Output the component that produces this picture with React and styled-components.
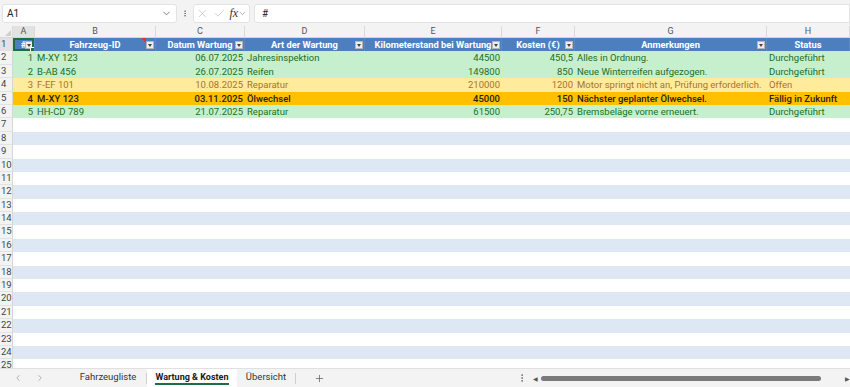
import React from "react";
import styled, { createGlobalStyle } from "styled-components";
import { X, Check, ChevronDown, EllipsisVertical, ChevronLeft, ChevronRight, Plus } from "lucide-react";

const COLS = "13px 22px 121px 89px 120px 137px 73px 192px 83px";
const ROW_H = 13.4;

const GlobalStyle = createGlobalStyle`
  html, body {
    margin: 0;
    padding: 0;
    background: #ffffff;
  }
  body {
    font-family: Roboto, "Liberation Sans", sans-serif;
  }
`;

const Shell = styled.div`
  width: 850px;
  height: 387px;
  display: flex;
  flex-direction: column;
  overflow: hidden;
  background: #ffffff;
`;

const FormulaBar = styled.div`
  height: 26px;
  flex: none;
  display: flex;
  align-items: center;
  padding: 0 0 0 2px;
  gap: 4px;
  background: #f3f3f3;
  box-sizing: border-box;
`;

const Box = styled.div`
  height: 19px;
  width: ${(p) => (p.$w ? `${p.$w}px` : "auto")};
  flex: ${(p) => (p.$grow ? 1 : "none")};
  background: #ffffff;
  border: 1px solid #e3e3e3;
  border-radius: ${(p) => (p.$grow ? "3px 0 0 3px" : "3px")};
  box-sizing: border-box;
  display: flex;
  align-items: center;
  padding: 0 ${(p) => (p.$tight ? "2px" : "4px")};
  gap: ${(p) => (p.$tight ? "4px" : "6px")};
  font-size: 10px;
  color: #222;
`;

const NameText = styled.span`
  flex: 1;
`;

const Fx = styled.span`
  font-family: "Liberation Serif", serif;
  font-style: italic;
  font-size: 12px;
  color: #333;
`;

const Dots = styled.div`
  display: flex;
  align-items: center;
  color: #555;
  width: 8px;
  justify-content: center;
`;

const Sheet = styled.div`
  flex: 1;
  overflow: hidden;
  display: flex;
  flex-direction: column;
`;

const LetterRow = styled.div`
  display: grid;
  grid-template-columns: ${COLS};
  height: 12px;
  flex: none;
  background: #f3f3f3;
  border-bottom: 1px solid #d6d6d6;
  box-sizing: border-box;
`;

const Letter = styled.div`
  font-size: 9px;
  line-height: 11px;
  text-align: center;
  color: #555;
  border-right: 1px solid #dadada;
  background: ${(p) => (p.$active ? "#e2e2e2" : "transparent")};
`;

const Corner = styled.div`
  border-right: 1px solid #dadada;
  position: relative;
  &::after {
    content: "";
    position: absolute;
    right: 1px;
    bottom: 1px;
    border-left: 6px solid transparent;
    border-bottom: 6px solid #cfcfcf;
  }
`;

const Row = styled.div`
  display: grid;
  grid-template-columns: ${COLS};
  height: ${ROW_H}px;
  flex: none;
  background: ${(p) => p.$bg};
  color: ${(p) => p.$fg || "#222"};
  font-weight: ${(p) => (p.$bold ? 500 : 400)};
`;

const RowNum = styled.div`
  background: ${(p) => (p.$active ? "#e2e2e2" : "#f3f3f3")};
  border-right: 1px solid #d6d6d6;
  border-bottom: 1px solid #e2e2e2;
  box-sizing: border-box;
  font-size: 9.5px;
  line-height: ${ROW_H - 1}px;
  padding-left: 1px;
  color: #444;
  font-weight: 400;
`;

const Cell = styled.div`
  font-size: 9.5px;
  line-height: ${ROW_H}px;
  padding: 0 2px;
  white-space: nowrap;
  overflow: hidden;
  text-align: ${(p) => p.$align || "left"};
`;

const HeadCell = styled.div`
  position: relative;
  background: #4d7fbf;
  color: #ffffff;
  font-size: 9.3px;
  font-weight: 700;
  line-height: ${ROW_H}px;
  text-align: center;
  white-space: nowrap;
  overflow: hidden;
  border-right: 1px solid #5a8ac6;
  box-sizing: border-box;
`;

const FilterBtn = styled.span`
  position: absolute;
  right: 1px;
  top: 3px;
  width: 8px;
  height: 8px;
  box-sizing: border-box;
  background: #eeeeee;
  border: 1px solid #b5b5b5;
  &::after {
    content: "";
    position: absolute;
    left: 1px;
    top: 2px;
    border-left: 2.5px solid transparent;
    border-right: 2.5px solid transparent;
    border-top: 3px solid #444;
  }
`;

const CommentMark = styled.span`
  position: absolute;
  top: 0;
  right: 9px;
  border-left: 5px solid transparent;
  border-top: 5px solid #e0342f;
`;

const Selection = styled.span`
  position: absolute;
  inset: 0;
  border: 2px solid #1f6e43;
  &::after {
    content: "";
    position: absolute;
    right: -4px;
    bottom: -4px;
    width: 4px;
    height: 4px;
    background: #1f6e43;
    border: 1px solid #ffffff;
  }
`;

const TabBar = styled.div`
  height: 19px;
  flex: none;
  display: flex;
  align-items: center;
  background: #f3f3f3;
  border-top: 1px solid #e0e0e0;
  box-sizing: border-box;
  font-size: 9.5px;
  color: #333;
`;

const Nav = styled.div`
  width: 70px;
  display: flex;
  align-items: center;
  gap: 12px;
  padding-left: 13px;
  box-sizing: border-box;
  color: #8a8a8a;
`;

const Tab = styled.div`
  width: ${(p) => p.$w}px;
  height: 100%;
  display: flex;
  align-items: center;
  justify-content: center;
  background: ${(p) => (p.$active ? "#ffffff" : "transparent")};
  font-weight: ${(p) => (p.$active ? 700 : 400)};
  font-size: ${(p) => (p.$active ? "9px" : "9.5px")};
  color: ${(p) => (p.$active ? "#1a1a1a" : "#333")};
  span {
    border-bottom: ${(p) => (p.$active ? "2px solid #1f6e43" : "2px solid transparent")};
    line-height: 12px;
    padding: 0 1px;
  }
`;

const Sep = styled.div`
  width: 1px;
  height: 11px;
  background: #cfcfcf;
`;

const AddBtn = styled.div`
  margin-left: 18px;
  display: flex;
  align-items: center;
  color: #555;
`;

const Spacer = styled.div`
  flex: 1;
`;

const ScrollZone = styled.div`
  width: 333px;
  display: flex;
  align-items: center;
  gap: 4px;
  color: #666;
`;

const Arrow = styled.span`
  font-size: 6px;
  color: #555;
`;

const Thumb = styled.div`
  width: 280px;
  height: 5px;
  border-radius: 3px;
  background: #7a7a7a;
  margin-left: 3px;
`;

const Track = styled.div`
  flex: 1;
  display: flex;
  align-items: center;
  padding-left: 2px;
`;

const LETTERS = ["A", "B", "C", "D", "E", "F", "G", "H"];
const HEADERS = [
  "#",
  "Fahrzeug-ID",
  "Datum Wartung",
  "Art der Wartung",
  "Kilometerstand bei Wartung",
  "Kosten (€)",
  "Anmerkungen",
  "Status",
];
const ALIGN = ["right", "left", "right", "left", "right", "right", "left", "left"];

const STYLES = {
  ok: { bg: "#c6efce", fg: "#1d6e1d" },
  open: { bg: "#ffeb9c", fg: "#a8742a" },
  due: { bg: "#ffc000", fg: "#2b2000", bold: true },
};

const DATA = [
  ["1", "M-XY 123", "06.07.2025", "Jahresinspektion", "44500", "450,5", "Alles in Ordnung.", "Durchgeführt", "ok"],
  ["2", "B-AB 456", "26.07.2025", "Reifen", "149800", "850", "Neue Winterreifen aufgezogen.", "Durchgeführt", "ok"],
  ["3", "F-EF 101", "10.08.2025", "Reparatur", "210000", "1200", "Motor springt nicht an, Prüfung erforderlich.", "Offen", "open"],
  ["4", "M-XY 123", "03.11.2025", "Ölwechsel", "45000", "150", "Nächster geplanter Ölwechsel.", "Fällig in Zukunft", "due"],
  ["5", "HH-CD 789", "21.07.2025", "Reparatur", "61500", "250,75", "Bremsbeläge vorne erneuert.", "Durchgeführt", "ok"],
];

export default function App() {
  const emptyRows = [];
  for (let n = 7; n <= 25; n++) emptyRows.push(n);

  return (
    <>
      <GlobalStyle />
      <Shell>
        <FormulaBar>
          <Box $w={175}>
            <NameText>A1</NameText>
            <ChevronDown size={11} strokeWidth={1.5} color="#444" />
          </Box>
          <Dots>
            <EllipsisVertical size={11} strokeWidth={2} />
          </Dots>
          <Box $w={57} $tight>
            <X size={13} strokeWidth={1.1} color="#b0b0b0" />
            <Check size={13} strokeWidth={1.1} color="#b0b0b0" />
            <Fx>fx</Fx>
            <ChevronDown size={9} strokeWidth={1.5} color="#777" style={{ marginLeft: -4 }} />
          </Box>
          <Box $grow>
            <span style={{ paddingLeft: 3 }}>#</span>
          </Box>
        </FormulaBar>

        <Sheet>
          <LetterRow>
            <Corner />
            {LETTERS.map((l) => (
              <Letter key={l} $active={l === "A"}>
                {l}
              </Letter>
            ))}
          </LetterRow>

          <Row $bg="#4d7fbf">
            <RowNum $active>1</RowNum>
            {HEADERS.map((h, i) => (
              <HeadCell key={h}>
                {h}
                {i === 1 && <CommentMark />}
                {i < 7 && <FilterBtn />}
                {i === 0 && <Selection />}
              </HeadCell>
            ))}
          </Row>

          {DATA.map((r, idx) => {
            const s = STYLES[r[8]];
            return (
              <Row key={idx} $bg={s.bg} $fg={s.fg} $bold={s.bold}>
                <RowNum>{idx + 2}</RowNum>
                {r.slice(0, 8).map((v, i) => (
                  <Cell key={i} $align={ALIGN[i]}>
                    {v}
                  </Cell>
                ))}
                <Cell />
              </Row>
            );
          })}

          {emptyRows.map((n) => (
            <Row key={n} $bg={n % 2 === 0 ? "#dde8f4" : "#ffffff"}>
              <RowNum>{n}</RowNum>
            </Row>
          ))}
        </Sheet>

        <TabBar>
          <Nav>
            <ChevronLeft size={10} strokeWidth={1.5} />
            <ChevronRight size={10} strokeWidth={1.5} />
          </Nav>
          <Tab $w={76}>
            <span>Fahrzeugliste</span>
          </Tab>
          <Sep />
          <Tab $w={90} $active>
            <span>Wartung &amp; Kosten</span>
          </Tab>
          <Tab $w={58}>
            <span>Übersicht</span>
          </Tab>
          <Sep />
          <AddBtn>
            <Plus size={11} strokeWidth={1.5} />
          </AddBtn>
          <Spacer />
          <ScrollZone>
            <EllipsisVertical size={10} strokeWidth={2} color="#666" />
            <Track>
              <Arrow>◀</Arrow>
              <Thumb />
              <Spacer />
              <Arrow>▶</Arrow>
            </Track>
          </ScrollZone>
        </TabBar>
      </Shell>
    </>
  );
}
